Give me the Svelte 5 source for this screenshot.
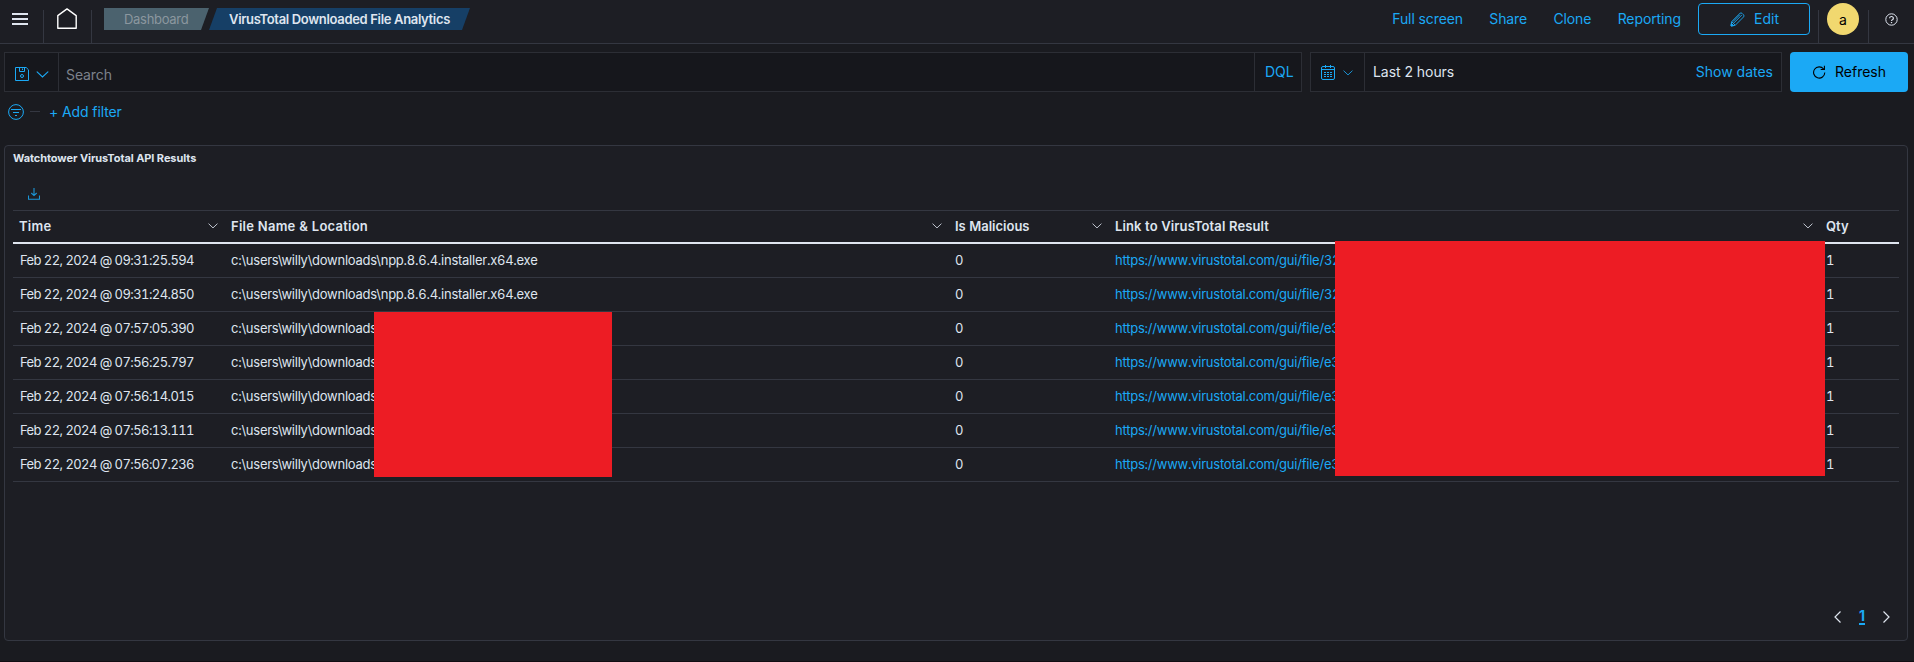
<script>
  const rows = [
    ['Feb 22, 2024 @ 09:31:25.594', 'c:\\users\\willy\\downloads\\npp.8.6.4.installer.x64.exe', '0', 'https://www.virustotal.com/gui/file/32', '1'],
    ['Feb 22, 2024 @ 09:31:24.850', 'c:\\users\\willy\\downloads\\npp.8.6.4.installer.x64.exe', '0', 'https://www.virustotal.com/gui/file/32', '1'],
    ['Feb 22, 2024 @ 07:57:05.390', 'c:\\users\\willy\\downloads', '0', 'https://www.virustotal.com/gui/file/e3', '1'],
    ['Feb 22, 2024 @ 07:56:25.797', 'c:\\users\\willy\\downloads', '0', 'https://www.virustotal.com/gui/file/e3', '1'],
    ['Feb 22, 2024 @ 07:56:14.015', 'c:\\users\\willy\\downloads', '0', 'https://www.virustotal.com/gui/file/e3', '1'],
    ['Feb 22, 2024 @ 07:56:13.111', 'c:\\users\\willy\\downloads', '0', 'https://www.virustotal.com/gui/file/e3', '1'],
    ['Feb 22, 2024 @ 07:56:07.236', 'c:\\users\\willy\\downloads', '0', 'https://www.virustotal.com/gui/file/e3', '1']
  ];
  const heads = ['Time', 'File Name & Location', 'Is Malicious', 'Link to VirusTotal Result', 'Qty'];
</script>

{#snippet chevron(w)}
  <svg width={w} height={w} viewBox="0 0 12 12" fill="none" stroke="currentColor" stroke-linecap="round"><path d="M1 3.5 6 8.3 11 3.5" /></svg>
{/snippet}

<div class="page">
  <header>
    <div class="menu">
      <svg width="16" height="12" viewBox="0 0 16 12" fill="#dfe5ef"><path d="M0 0h16v2H0zM0 5h16v2H0zM0 10h16v2H0z" /></svg>
    </div>
    <div class="home">
      <svg width="20" height="22" viewBox="0 0 20 22" fill="none" stroke="#fff" stroke-width="1.4" stroke-linejoin="round"><path d="M.8 7.6 10 .9l9.2 6.7v12.7H.8z" /></svg>
    </div>
    <nav class="crumbs">
      <span class="crumb first">Dashboard</span>
      <span class="crumb last">VirusTotal Downloaded File Analytics</span>
    </nav>
    <div class="links">
      <span>Full screen</span><span>Share</span><span>Clone</span><span>Reporting</span>
    </div>
    <button class="edit">
      <svg width="15" height="15" viewBox="0 0 15 15" fill="none" stroke="currentColor" stroke-linejoin="round"><path d="M1 14l.6-4.3L10 1.300q1-.8 2 0l1.600 1.600q.8 1 0 2L5.200 13.300zM1.700 9.700l3.500 3.500M3.800 11 11.800 3M3 9.600 9.800 2.800" stroke-width=".9" /><path d="M1 14l.4-2.500L3.500 13.600z" fill="currentColor" /></svg>
      <span>Edit</span>
    </button>
    <div class="user"><span class="avatar">a</span></div>
    <div class="help">
      <svg width="13" height="13" viewBox="0 0 13 13" fill="none" stroke="#dfe5ef"><circle cx="6.500" cy="6.500" r="5.700" /><path d="M4.600 5.200a1.900 1.700 0 1 1 2.800 1.500q-.9.400-.9 1.400" stroke-width="1.200" /><path d="M6.500 9v1.200" stroke-width="1.300" /></svg>
    </div>
  </header>

  <section class="query">
    <div class="search">
      <div class="saved">
        <svg width="14" height="14" viewBox="0 0 14 14" fill="none" stroke="currentColor"><path d="M.5.5h10.700l2.300 2.300v10.700H.5zM4.500.5v4h5v-4" /><path d="M7.500 1.500v1.500" /><circle cx="7" cy="9" r="1.500" /></svg>
        {@render chevron(13)}
      </div>
      <div class="input"><span>Search</span></div>
      <div class="dql"><span>DQL</span></div>
    </div>
    <div class="time">
      <div class="cal">
        <svg width="14" height="15" viewBox="0 0 14 15" fill="none" stroke="currentColor"><rect x=".5" y="1.500" width="13" height="13" rx="1.500" /><path d="M.5 4.500h13M4.500 0v3M9.500 0v3" /><path d="M3 7.500h8M3 9.500h8M3 11.500h8" stroke-dasharray="2 1" /></svg>
        {@render chevron(10)}
      </div>
      <span class="range">Last 2 hours</span>
      <span class="dates">Show dates</span>
    </div>
    <button class="refresh">
      <svg width="13" height="14" viewBox="0 0 13 14" fill="none" stroke="currentColor" stroke-width="1.100"><path d="M11.800 7.500A5.600 5.600 0 1 1 10.600 4M11.400.7v3.800H7.700" /></svg>
      <span>Refresh</span>
    </button>
  </section>

  <section class="filters">
    <svg width="16" height="16" viewBox="0 0 16 16" fill="none" stroke="#1ba9f5"><circle cx="8" cy="8" r="7.400" /><path d="M3 5.500h10M5 8.500h6M7 11.500h2" /></svg>
    <i></i>
    <span>+ Add filter</span>
  </section>

  <section class="panel">
    <h2>Watchtower VirusTotal API Results</h2>
    <div class="tools">
      <svg width="12" height="12" viewBox="0 0 12 12" fill="none" stroke="#1b95d6" stroke-width="1.100"><path d="M6 0v7.500M3.300 5 6 7.600 8.700 5M.5 7.500v3.800h11V7.500" /></svg>
    </div>
    <div class="table">
      <div class="row head">
        {#each heads as h, i}
          <div class="cell"><span class="h{i}">{h}</span>{#if i < 4}{@render chevron(10)}{/if}</div>
        {/each}
      </div>
      {#each rows as r}
        <div class="row">
          {#each r as c, i}
            <div class="cell c{i}"><span>{c}</span></div>
          {/each}
        </div>
      {/each}
      <div class="mask files"></div>
      <div class="mask hashes"></div>
    </div>
    <div class="pager">
      <svg width="7" height="12" viewBox="0 0 7 12" fill="none" stroke="#dfe5ef" stroke-width="1.200"><path d="M6.500.5 1 6l5.500 5.500" /></svg>
      <b>1</b>
      <svg width="7" height="12" viewBox="0 0 7 12" fill="none" stroke="#dfe5ef" stroke-width="1.200"><path d="M.5.5 6 6 .5 11.500" /></svg>
    </div>
  </section>
</div>

<style>
  :global(body) { margin: 0; background: #1a1b20; }
  * { box-sizing: border-box; }
  .page { width: 1914px; height: 662px; overflow: hidden; background: #1a1b20; color: #dfe5ef; font: 14px/20px Inter, sans-serif; display: flex; flex-direction: column; border-bottom: 1px solid #110d12; }
  span, b { white-space: nowrap; }
  svg { flex: none; display: block; }
  button { font: inherit; margin: 0; padding: 0; }
  header { height: 44px; flex: none; background: #1d1e24; border-bottom: 1px solid #343741; display: flex; align-items: flex-start; }
  .menu { width: 44px; height: 43px; padding: 13px 0 0 12px; }
  .home { width: 48px; height: 43px; padding: 8px 0 0 13px; }
  .menu, .home { border-style: solid; border-width: 0 1px 0 0; border-image: linear-gradient(transparent 11px, #343741 11px) 1; }
  .crumbs { margin: 8px 0 0 12px; display: flex; }
  .crumb { height: 22px; display: flex; align-items: center; font-size: 13px; letter-spacing: -.3px; }
  .first { width: 105px; padding-left: 20px; background: #4b626e; color: #8b979f; clip-path: polygon(0 0, 100% 0, 97px 100%, 0 100%); }
  .last { width: 261px; padding-left: 20px; background: #163f66; color: #dfe5ef; font-weight: 600; letter-spacing: -.33px; clip-path: polygon(8px 0, 100% 0, 253px 100%, 0 100%); }
  .links { margin: 9px 0 0 auto; display: flex; gap: 26.300px; color: #1ba9f5; letter-spacing: -.1px; }
  .edit { margin: 3px 8px 0 17px; width: 112px; height: 32px; border: 1px solid #1ba9f5; border-radius: 4px; background: none; color: #1ba9f5; display: flex; align-items: center; padding-left: 31px; gap: 9px; }
  .user { width: 51px; height: 43px; padding: 3px 0 0 8px; border-style: solid; border-width: 0 1px; border-image: linear-gradient(transparent 11px, #343741 11px) 1; }
  .avatar { width: 32px; height: 32px; border-radius: 50%; background: #f1d86f; color: #000; display: flex; align-items: center; justify-content: center; padding-top: 2px; }
  .help { width: 45px; padding: 13px 0 0 16px; }
  .query { display: flex; margin: 8px 6px 0 4px; height: 40px; flex: none; }
  .search, .time { background: #16171c; border: 1px solid #2c2e35; display: flex; align-items: center; }
  .search { width: 1298px; margin-right: 8px; }
  .saved { width: 54px; height: 38px; border-right: 1px solid #2c2e35; display: flex; align-items: center; padding: 4px 0 0 10px; gap: 7px; color: #1ba9f5; }
  .input { flex: 1; padding: 6px 0 0 7px; color: #7d828c; letter-spacing: -.1px; }
  .dql { width: 47px; height: 38px; border-left: 1px solid #2c2e35; padding: 9px 0 0 10px; color: #1ba9f5; }
  .time { width: 472px; margin-right: 8px; }
  .cal { width: 54px; height: 38px; border-right: 1px solid #2c2e35; color: #1ba9f5; display: flex; align-items: center; gap: 8px; padding: 1px 0 0 10px; }
  .range { margin-left: 8px; letter-spacing: -.05px; }
  .dates { margin-left: auto; margin-right: 8px; color: #1ba9f5; }
  .refresh { width: 118px; height: 40px; border: 0; border-radius: 4px; background: #1ba9f5; color: #000; display: flex; align-items: center; padding-left: 23px; gap: 9px; }
  .filters { height: 53px; flex: none; padding: 12px 0 0 8px; display: flex; align-items: flex-start; color: #1ba9f5; }
  .filters i { width: 10px; height: 1px; background: #343741; margin: 7px 9px 0 6px; }
  .filters span { line-height: 16px; letter-spacing: -.1px; }
  .panel { margin: 0 6px 0 4px; height: 496px; flex: none; background: #1d1e24; border: 1px solid #343741; border-radius: 4px; padding: 0 8px; display: flex; flex-direction: column; }
  h2 { margin: 2px 0 0; font-size: 11px; line-height: 20px; font-weight: 700; height: 40px; letter-spacing: -.08px; }
  .tools { height: 22px; padding: 0 0 0 15px; }
  .table { position: relative; border-top: 1px solid #343741; }
  .row { display: grid; grid-template-columns: 212px 724px 160px 711px 79px; height: 34px; border-bottom: 1px solid #343741; font-size: 13px; font-feature-settings: "tnum"; }
  .cell { display: flex; align-items: center; padding: 0 6px 1px; min-width: 0; }
  .c0 { padding-left: 7px; letter-spacing: -.58px; }
  .c1 { letter-spacing: -.25px; }
  .c3 { color: #1ba9f5; letter-spacing: -.23px; }
  .c4 { padding-left: 6px; }
  .head { height: 33px; border-bottom: 2px solid #dfe5ef; font-weight: 600; }
  .head .cell { justify-content: space-between; padding-right: 7px; }
  .h0, .h1 { letter-spacing: .24px; }
  .h3 { letter-spacing: .1px; }
  .mask { position: absolute; background: #ed1c24; }
  .files { left: 361px; top: 101px; width: 238px; height: 165px; }
  .hashes { left: 1322px; top: 30px; width: 490px; height: 235px; }
  .pager { margin-top: auto; padding: 0 9px 15px 0; display: flex; justify-content: flex-end; align-items: center; color: #1ba9f5; }
  .pager b { margin: 0 18px; line-height: 14px; border-bottom: 2px solid; }
</style>
